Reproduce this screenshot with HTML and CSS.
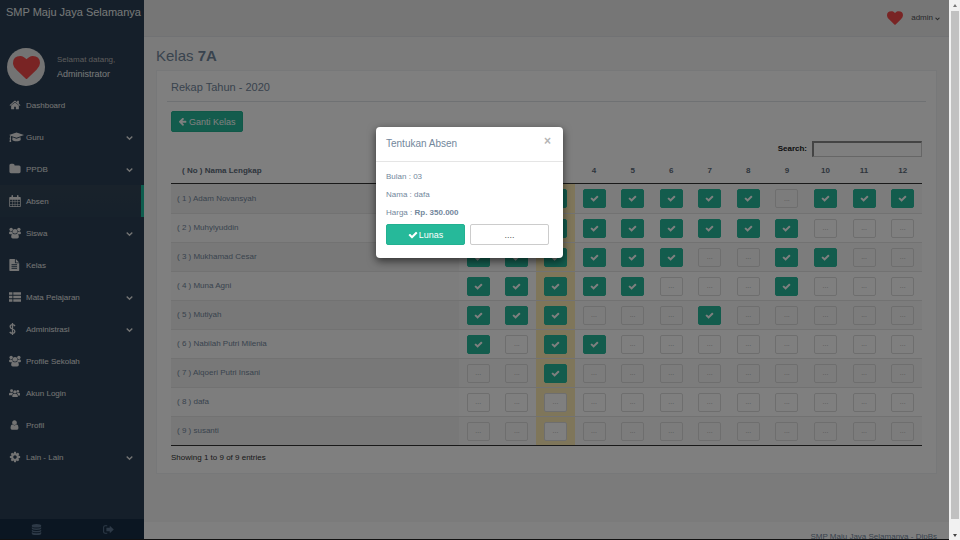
FILE: index.html
```html
<!DOCTYPE html>
<html lang="id">
<head>
<meta charset="utf-8">
<title>SMP Maju Jaya Selamanya</title>
<link rel="stylesheet" href="styles.css">
</head>
<body>
<svg class="sprite" aria-hidden="true">
  <symbol id="check" viewBox="0 0 1792 1792"><path d="M1671 566q0 40-28 68l-724 724-136 136q-28 28-68 28t-68-28l-136-136-362-362q-28-28-28-68t28-68l136-136q28-28 68-28t68 28l294 295 656-657q28-28 68-28t68 28l136 136q28 28 28 68z"/></symbol>
  <symbol id="home" viewBox="0 0 1792 1792"><path d="M1472 992v480q0 26-19 45t-45 19h-384v-384h-256v384h-384q-26 0-45-19t-19-45v-480q0-1 .5-3t.5-3l575-474 575 474q1 2 1 6zm223-69l-62 74q-8 9-21 11h-3q-13 0-21-7l-692-577-692 577q-12 8-24 7-13-2-21-11l-62-74q-8-10-7-23.5t11-21.5l719-599q32-26 76-26t76 26l244 204v-195q0-14 9-23t23-9h192q14 0 23 9t9 23v408l219 182q10 8 11 21.5t-7 23.5z"/></symbol>
  <symbol id="down" viewBox="0 0 1792 1792"><path d="M1683 808l-742 741q-19 19-45 19t-45-19l-742-741q-19-19-19-45.500t19-45.500l166-165q19-19 45-19t45 19l531 531 531-531q19-19 45-19t45 19l166 165q19 19 19 45.500t-19 45.500z"/></symbol>
  <symbol id="heart" viewBox="0 0 1792 1792"><path d="M896 1664q-26 0-44-18l-624-602q-10-8-27.500-26t-55.500-65.500-68-97.500-53.500-121-23.500-138q0-220 127-344t351-124q62 0 126.500 21.500t120 58 95.500 68.500 76 68q36-36 76-68t95.500-68.500 120-58 126.500-21.500q224 0 351 124t127 344q0 221-229 450l-623 600q-18 18-44 18z"/></symbol>
  <symbol id="user" viewBox="0 0 1792 1792"><path d="M1536 1399q0 109-62.500 187t-150.500 78h-854q-88 0-150.500-78t-62.500-187q0-85 8.500-160.500t31.500-152 58.500-131 94-89 134.500-34.500q131 128 313 128t313-128q76 0 134.500 34.500t94 89 58.500 131 31.500 152 8.500 160.500zm-256-887q0 159-112.500 271.500t-271.500 112.500-271.500-112.500-112.500-271.500 112.500-271.500 271.500-112.500 271.500 112.500 112.500 271.500z"/></symbol>
  <symbol id="folder" viewBox="0 0 1792 1792"><path d="M1728 608v704q0 92-66 158t-158 66h-1216q-92 0-158-66t-66-158v-960q0-92 66-158t158-66h320q92 0 158 66t66 158v32h672q92 0 158 66t66 158z"/></symbol>
  <symbol id="cog" viewBox="0 0 1792 1792"><path d="M1152 896q0-106-75-181t-181-75-181 75-75 181 75 181 181 75 181-75 75-181zm512-109v222q0 12-8 23t-20 13l-185 28q-19 54-39 91 35 50 107 138 10 12 10 25t-9 23q-27 37-99 108t-94 71q-12 0-26-9l-138-108q-44 23-91 38-16 136-29 186-7 28-36 28h-222q-14 0-24.500-8.500t-11.500-21.500l-28-184q-49-16-90-37l-141 107q-10 9-25 9-14 0-25-11-126-114-165-168-7-10-7-23 0-12 8-23 15-21 51-66.500t54-70.500q-27-50-41-99l-183-27q-13-2-21-12.500t-8-23.500v-222q0-12 8-23t19-13l186-28q14-46 39-92-40-57-107-138-10-12-10-24 0-10 9-23 26-36 98.500-107.500t94.500-71.500q13 0 26 10l138 107q44-23 91-38 16-136 29-186 7-28 36-28h222q14 0 24.500 8.500t11.500 21.500l28 184q49 16 90 37l142-107q9-9 24-9 13 0 25 10 129 119 165 170 7 8 7 22 0 12-8 23-15 21-51 66.500t-54 70.500q26 50 41 98l183 28q13 2 21 12.500t8 23.500z"/></symbol>
  <symbol id="left" viewBox="0 0 1792 1792"><path d="M1664 896v128q0 53-32.500 90.500t-84.500 37.500h-704l293 294q38 36 38 90t-38 90l-75 76q-37 37-90 37-52 0-91-37l-651-652q-37-37-37-90 0-52 37-91l651-650q38-38 91-38 52 0 90 38l75 74q38 38 38 91t-38 91l-293 293h704q52 0 84.500 37.500t32.500 90.500z"/></symbol>
  <symbol id="cap" viewBox="0 0 30 24"><path d="M15 3 30 8.200 15 13.500 4.500 9.800C3.700 10.800 3.500 12 3.500 13.200c1 .8 1 2 .2 2.700L4.500 22H1l.8-6.100c-.9-.8-.8-2 .1-2.700 0-1.500.3-3 1-4L0 8.200zM7 12.500l8 2.900 8-2.900.5 5.500c-3 3.500-14 3.500-17 0z"/></symbol>
  <symbol id="calendar" viewBox="0 0 24 24"><path fill-rule="evenodd" d="M2 4h3V1.500Q5 0 6.500 0T8 1.500V4h8V1.500Q16 0 17.500 0T19 1.500V4h3q1.500 0 1.500 1.500v17Q23.500 24 22 24H2Q.5 24 .5 22.500v-17Q.5 4 2 4zm0 5.500v3.500h4V9.500zm5 0v3.500h4.500V9.500zm5.500 0v3.500H17V9.500zm5.500 0v3.500h4V9.500zM2 14v4h4v-4zm5 0v4h4.500v-4zm5.500 0v4H17v-4zm5.500 0v4h4v-4zM2 19v3.500h4V19zm5 0v3.500h4.500V19zm5.500 0v3.500H17V19zm5.500 0v3.500h4V19z"/></symbol>
  <symbol id="users" viewBox="0 0 28 26"><circle cx="5" cy="5" r="4"/><circle cx="23" cy="5" r="4"/><path d="M3 9q3 2 5 1 0 3 2 4-3 0-4 2H3Q0 16 0 13q0-3 3-4zM25 9q-3 2-5 1 0 3-2 4 3 0 4 2h3q3 0 3-3 0-3-3-4z"/><circle cx="14" cy="9" r="5.500"/><path d="M9 14q5 4 10 0 4 1 4 8 0 4-4 4H9q-4 0-4-4 0-7 4-8z"/></symbol>
  <symbol id="group" viewBox="0 0 30 22"><circle cx="7" cy="5" r="4"/><circle cx="24" cy="6" r="3.500"/><path d="M3 10h9q-4 3-3 7H0v-3q0-4 3-4zM20 10h7q3 0 3 4v4h-5q0-5-5-8z"/><circle cx="16" cy="8" r="4.500"/><path d="M12 14h8q4 1 4 6v2H9v-2q0-5 3-6z"/></symbol>
  <symbol id="file" viewBox="0 0 24 28"><path fill-rule="evenodd" d="M1.500 0H13v8.500Q13 10 14.500 10H23v16.500q0 1.500-1.500 1.500h-20Q0 28 0 26.500v-25Q0 0 1.500 0zM15 0l8 8h-8zM5 12.500v2h13v-2zm0 4.500v2h13v-2zm0 4.500v2h13v-2z"/></symbol>
  <symbol id="list" viewBox="0 0 28 22"><path d="M0 0h8v6H0zM10 0h18v6H10zM0 8h8v6H0zM10 8h18v6H10zM0 16h8v6H0zM10 16h18v6H10z"/></symbol>
  <symbol id="dollar" viewBox="0 0 16 28"><path d="M8 0v28M14 7Q11 4 8 4 2.500 4 2.500 8.500 2.500 12.500 8 14t5.500 5.500Q13.500 24 8 24 4 24 1.500 21" fill="none" stroke="currentColor" stroke-width="3"/></symbol>
  <symbol id="database" viewBox="0 0 24 28"><path d="M0 5v-1q0-4 12-4t12 4v1q0 4-12 4T0 5zM0 8.500q3 3 12 3t12-3V11q0 4-12 4T0 11zM0 14.500q3 3 12 3t12-3V17q0 4-12 4T0 17zM0 20.500q3 3 12 3t12-3V24q0 4-12 4T0 24z"/></symbol>
  <symbol id="exit" viewBox="0 0 26 22"><path d="M10 2H5Q1.500 2 1.500 5.500v11Q1.500 20 5 20h5" fill="none" stroke="currentColor" stroke-width="2.500"/><path d="M16 2l9.500 9L16 20v-5H8V7h8z"/></symbol>
</svg>

<div class="window">
  <div class="app">
    <nav class="sidebar">
      <a class="brand" href="#">SMP Maju Jaya Selamanya</a>
      <div class="profile">
        <span class="avatar"><svg><use href="#heart"/></svg></span>
        <div><p>Selamat datang,</p><strong>Administrator</strong></div>
      </div>
      <ul class="menu">
        <li><a href="#"><svg class="icon"><use href="#home"/></svg>Dashboard</a></li>
        <li><a href="#"><svg class="icon wide"><use href="#cap"/></svg>Guru<svg class="caret"><use href="#down"/></svg></a></li>
        <li><a href="#"><svg class="icon"><use href="#folder"/></svg>PPDB<svg class="caret"><use href="#down"/></svg></a></li>
        <li><a class="active" href="#"><svg class="icon"><use href="#calendar"/></svg>Absen</a></li>
        <li><a href="#"><svg class="icon"><use href="#users"/></svg>Siswa<svg class="caret"><use href="#down"/></svg></a></li>
        <li><a href="#"><svg class="icon narrow"><use href="#file"/></svg>Kelas</a></li>
        <li><a href="#"><svg class="icon"><use href="#list"/></svg>Mata Pelajaran<svg class="caret"><use href="#down"/></svg></a></li>
        <li><a href="#"><svg class="icon slim"><use href="#dollar"/></svg>Administrasi<svg class="caret"><use href="#down"/></svg></a></li>
        <li><a href="#"><svg class="icon"><use href="#users"/></svg>Profile Sekolah</a></li>
        <li><a href="#"><svg class="icon narrow"><use href="#group"/></svg>Akun Login</a></li>
        <li><a href="#"><svg class="icon narrow"><use href="#user"/></svg>Profil</a></li>
        <li><a href="#"><svg class="icon"><use href="#cog"/></svg>Lain - Lain<svg class="caret"><use href="#down"/></svg></a></li>
      </ul>
      <div class="side-tools">
        <a href="#" aria-label="Database"><svg><use href="#database"/></svg></a>
        <a href="#" aria-label="Logout"><svg><use href="#exit"/></svg></a>
      </div>
    </nav>

    <div class="page">
      <header class="topbar">
        <a href="#"><svg class="top-heart"><use href="#heart"/></svg>admin<svg class="top-caret"><use href="#down"/></svg></a>
      </header>
      <main>
        <h1>Kelas <b>7A</b></h1>
        <section class="card">
          <h2>Rekap Tahun - 2020</h2>
          <div class="card-body">
            <button class="back" type="button"><svg><use href="#left"/></svg>Ganti Kelas</button>
            <div class="search"><label for="search">Search:</label><input id="search" type="text"></div>
            <table>
              <colgroup><col class="name-col"><col span="12"></colgroup>
              <thead><tr id="months"><th class="name-head">( No ) Nama Lengkap</th></tr></thead>
              <tbody id="rows"></tbody>
            </table>
            <p class="info">Showing 1 to 9 of 9 entries</p>
          </div>
        </section>
      </main>
      <footer>SMP Maju Jaya Selamanya - DipBs</footer>
    </div>

    <div class="overlay">
      <section class="modal" role="dialog" aria-labelledby="modal-title">
        <div class="modal-head"><h3 id="modal-title">Tentukan Absen</h3><button type="button" class="close" aria-label="Tutup">×</button></div>
        <div class="modal-body">
          <p>Bulan : 03</p>
          <p>Nama : dafa</p>
          <p>Harga : <b>Rp. 350.000</b></p>
          <div class="choices">
            <button type="button" class="paid"><svg><use href="#check"/></svg>Lunas</button>
            <button type="button">....</button>
          </div>
        </div>
      </section>
    </div>
  </div>
  <div class="scroll" aria-hidden="true"><span class="up"></span><span class="thumb"></span><span class="dn"></span></div>
</div>
<script src="table.js"></script>
</body>
</html>
```
FILE: styles.css
```css
* { box-sizing: border-box; }
body { margin: 0; background: #111; color: #73879c; font: 8px/12px "Liberation Sans", Arial, sans-serif; }
h1, h2, h3, p, ul { margin: 0; padding: 0; font-weight: 400; }
a { color: inherit; text-decoration: none; }
button, input { font: inherit; color: inherit; margin: 0; }
svg { fill: currentColor; flex: none; }
.sprite { display: none; }

.window { display: flex; height: 100vh; overflow: hidden; }
.app { position: relative; flex: 1; display: flex; min-width: 0; margin-bottom: 1px; overflow: hidden; }

.sidebar { width: 144px; flex: none; display: flex; flex-direction: column; background: #2a3f54; color: #e7e7e7; }
.brand { padding: 4px 6px; font-size: 11px; line-height: 16px; white-space: nowrap; color: #ecf0f1; }
.profile { display: flex; align-items: center; gap: 12px; padding: 24px 7px 3px; }
.profile p { color: #bab8b8; line-height: 14px; }
.profile strong { font-weight: 400; font-size: 9px; line-height: 14px; color: #ecf0f1; }
.avatar { display: grid; place-items: center; width: 38px; height: 38px; border-radius: 50%; background: #e6e6e6; }
.avatar svg { width: 27px; height: 27px; color: #f24848; }
.menu { list-style: none; }
.menu a { display: flex; align-items: center; height: 32px; padding: 1px 11px 0 9px; }
.menu .active { background: linear-gradient(#334556, #2c4257); border-right: 3px solid #1abb9c; }
.icon { width: 12px; height: 12px; margin: 0 5px 2px 0; }
.icon.wide { width: 15px; margin-right: 2px; }
.icon.narrow { width: 11px; margin-right: 6px; }
.icon.slim { width: 7px; margin-right: 10px; }
.caret { width: 7px; height: 7px; margin-left: auto; }
.side-tools { display: flex; margin-top: auto; background: #172d44; color: #5a738e; }
.side-tools a { flex: 1; display: grid; place-items: center; height: 20px; }
.side-tools svg { width: 11px; height: 11px; }

.page { flex: 1; min-width: 0; display: flex; flex-direction: column; background: #f7f7f7; }
.topbar { display: flex; justify-content: flex-end; align-items: center; height: 37px; padding: 0 9px; background: #ededed; border-bottom: 1px solid #e2e5e8; color: #515356; }
.topbar a { display: flex; align-items: center; }
.top-heart { width: 16px; height: 16px; color: #f24848; margin-right: 8px; }
.top-caret { width: 5px; height: 5px; margin-left: 2px; }
main { flex: 1; padding: 8px 12px; }
h1 { font-size: 15px; line-height: 22px; margin-bottom: 3px; }
.card { background: #fff; border: 1px solid #eff0f2; padding: 6px 10px 9px; }
h2 { font-size: 11px; line-height: 20px; padding: 0 4px 4px; border-bottom: 1px solid #dfe2e6; }
.card-body { padding: 9px 4px 0; }
.back { display: flex; align-items: center; gap: 2px; height: 21px; padding: 0 6px; border: 1px solid #22b191; border-radius: 2px; background: #26b99a; color: #fff; font-size: 9px; }
.back svg { width: 9px; height: 9px; }
.search { display: flex; justify-content: flex-end; align-items: center; gap: 5px; margin-top: 9px; color: #222; font-weight: 700; }
.search input { width: 110px; height: 16px; padding: 1px; border: 1px solid #ccc; border-top: 2px solid #888; border-left: 2px solid #888; background: #fff; }
table { width: 100%; table-layout: fixed; border-collapse: separate; border-spacing: 0; margin-top: 2px; border-bottom: 1px solid #333; }
.name-col { width: 288px; }
th { height: 25px; padding: 0; border-bottom: 1px solid #333; color: #5d6b7a; }
.name-head { text-align: left; padding-left: 11px; }
td { height: 29px; padding: 0; border-top: 1px solid #e4e4e4; text-align: center; }
tbody tr:first-child td { border-top: 0; }
tbody tr:nth-child(odd) td { background: #f9f9f9; }
tbody tr td.name { text-align: left; padding-left: 6px; background: #fafafa; }
tbody tr:nth-child(odd) td.name { background: #f1f1f1; }
tbody tr td.current { background: #ffedb5; }
.mark { display: inline-grid; place-items: center; width: 23px; height: 19px; padding: 0; border: 1px solid #dcdcdc; border-radius: 2px; background: transparent; vertical-align: middle; color: #aaa; font-size: 7px; }
tbody tr .current .mark { background-color: #fff; }
tbody tr .mark.done, tbody tr .current .mark.done { background: #26b99a; border-color: #26b99a; color: #fff; }
.mark svg { width: 9px; height: 9px; }
.info { margin-top: 6px; color: #333; }
footer { height: 17px; padding: 9px 12px 0; background: #fff; text-align: right; white-space: nowrap; }

.overlay { position: absolute; inset: 0; padding: 127px 10px 0 0; background: rgba(0, 0, 0, .5); }
.modal { width: 187px; margin: 0 auto; border-radius: 4px; background: #fff; box-shadow: 0 3px 9px rgba(0, 0, 0, .6); }
.modal-head { display: flex; justify-content: space-between; padding: 8px 12px 8px 10px; border-bottom: 1px solid #e5e5e5; }
h3 { font-size: 10px; line-height: 18px; }
.close { align-self: flex-start; padding: 0; border: 0; background: none; font-size: 12px; font-weight: 700; line-height: 13px; color: #b5b5b5; }
.modal-body { padding: 6px 14px 13px 10px; }
.modal-body p { line-height: 18px; }
.choices { display: flex; gap: 5px; margin-top: 2px; }
.choices button { flex: 1; display: flex; justify-content: center; align-items: center; gap: 1px; height: 21px; padding: 0; border: 1px solid #ccc; border-radius: 2px; background: #fff; color: #555; font-size: 9px; }
.choices .paid { background: #26b99a; border-color: #22b191; color: #fff; }
.choices svg { width: 10px; height: 10px; }

.scroll { width: 11px; flex: none; display: flex; flex-direction: column; align-items: center; background: #f1f1f1; padding: 4px 0 3px; }
.up, .dn { border: 2px solid transparent; }
.up { border-top: 0; border-bottom: 3px solid #777; }
.dn { border-bottom: 0; border-top: 3px solid #444; margin-top: 15px; }
.thumb { flex: 1; width: 8px; margin-top: 4px; background: #c1c1c1; }
```
FILE: table.js
```js
const students = [
  ["Adam Novansyah", "111111110111"],
  ["Muhyiyuddin", "111111111000"],
  ["Mukhamad Cesar", "111111001100"],
  ["Muna Agni", "111110001000"],
  ["Mutiyah", "111000100000"],
  ["Nabilah Putri Milenia", "101100000000"],
  ["Alqoeri Putri Insani", "001000000000"],
  ["dafa", "000000000000"],
  ["susanti", "000000000000"]
];
const months = document.getElementById("months");
for (let m = 1; m <= 12; m++) {
  months.insertAdjacentHTML("beforeend", `<th>${m}</th>`);
}
document.getElementById("rows").innerHTML = students.map(([name, marks], i) => {
  const cells = [...marks].map((mark, m) => {
    const button = mark === "1"
      ? `<button type="button" class="mark done" aria-label="Lunas"><svg><use href="#check"/></svg></button>`
      : `<button type="button" class="mark">...</button>`;
    return `<td${m === 2 ? ' class="current"' : ""}>${button}</td>`;
  }).join("");
  return `<tr><td class="name">( ${i + 1} ) ${name}</td>${cells}</tr>`;
}).join("");
```
